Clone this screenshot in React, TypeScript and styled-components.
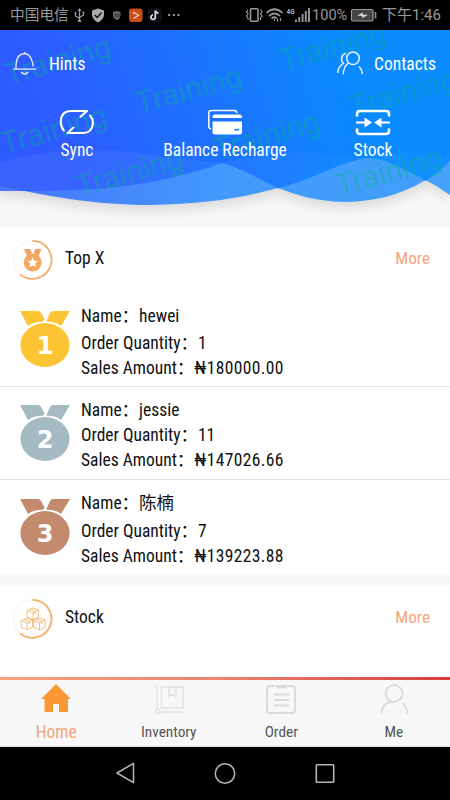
import React from "react";
import styled, { createGlobalStyle } from "styled-components";

const GlobalStyle = createGlobalStyle`
  * { box-sizing: border-box; }
  body {
    margin: 0;
    background: #000;
    font-family: "Roboto Condensed", Roboto, "Noto Sans CJK SC", sans-serif;
    font-size: 17.5px;
    color: #111;
  }
  svg { display: block; flex: none; }
`;

const Screen = styled.div`
  width: 450px;
  height: 800px;
  display: flex;
  flex-direction: column;
  overflow: hidden;
  background: #f7f7f7;
`;

const StatusBar = styled.div`
  height: 30px;
  flex: none;
  display: flex;
  align-items: center;
  background: #000;
  color: #999;
  padding: 0 10px 0 10px;
  font-family: Roboto, "Noto Sans CJK SC", sans-serif;
`;

const StatusText = styled.span<{ $size: number; $left?: number; $width?: number }>`
  font-size: ${(p) => p.$size}px;
  font-weight: 400;
  line-height: 31px;
  margin-left: ${(p) => p.$left ?? 0}px;
  ${(p) => (p.$width ? `width: ${p.$width}px;` : "")}
  white-space: nowrap;
`;

const Spacer = styled.div`
  flex: 1;
`;

const Header = styled.header`
  position: relative;
  height: 197px;
  flex: none;
  color: #fff;
`;

const Backdrop = styled.svg`
  position: absolute;
  inset: 0;
`;

const HeaderContent = styled.div`
  position: relative;
`;

const TopLinks = styled.div`
  display: flex;
  justify-content: space-between;
  padding: 20px 14px 0 13px;
  height: 78px;
`;

const TopLink = styled.div<{ $gap: number }>`
  display: flex;
  align-items: center;
  gap: ${(p) => p.$gap}px;
  height: 28px;
`;

const Actions = styled.div`
  display: grid;
  grid-template-columns: 154px 142px 154px;
`;

const Action = styled.div`
  display: flex;
  flex-direction: column;
  align-items: center;
  line-height: 28px;
  white-space: nowrap;
`;

const Card = styled.section<{ $height: number }>`
  height: ${(p) => p.$height}px;
  flex: none;
  background: #fff;
  overflow: hidden;
`;

const CardHead = styled.div<{ $height: number }>`
  display: flex;
  height: ${(p) => p.$height}px;
  padding: 12px 20px 0 12px;
`;

const CardTitle = styled.h2`
  margin: 0 auto 0 12px;
  font-size: 17.5px;
  font-weight: 400;
  line-height: 39px;
`;

const More = styled.span`
  color: #f4a57c;
  font-size: 17.2px;
  line-height: 39px;
`;

const Gap = styled.div`
  height: 12px;
  flex: none;
`;

const Seller = styled.div<{ $height: number; $pad: number }>`
  display: flex;
  height: ${(p) => p.$height}px;
  padding: 0 0 0 19px;
  & + & {
    border-top: 1px solid #e4e4e4;
  }
  & > :last-child {
    padding-top: ${(p) => p.$pad}px;
  }
`;

const Lines = styled.div`
  margin-left: 11px;
`;

const Line = styled.div<{ $height: number }>`
  height: ${(p) => p.$height}px;
  line-height: 25px;
  white-space: nowrap;
`;

const Amount = styled.span`
  letter-spacing: 0.36px;
`;

const MedalBox = styled.div<{ $top: number }>`
  padding-top: ${(p) => p.$top}px;
`;

const TabBar = styled.nav`
  height: 70px;
  flex: none;
  display: grid;
  grid-template-columns: repeat(4, 1fr);
  padding-top: 3px;
  background: linear-gradient(90deg, #f9a37c, #e98270 50%, #d93e38) 0 0 / 100% 3px no-repeat, #f7f7f7;
  border-bottom: 1px solid #dcdcdc;
`;

const Tab = styled.div<{ $active?: boolean }>`
  display: flex;
  flex-direction: column;
  align-items: center;
  padding-top: 3px;
  color: ${(p) => (p.$active ? "#f4a57c" : "#555")};
  font-size: ${(p) => (p.$active ? 17.5 : 15.3)}px;
  line-height: 34px;
`;

const SystemBar = styled.div`
  height: 53px;
  flex: none;
  display: flex;
  justify-content: center;
  align-items: center;
  gap: 76px;
  background: #000;
`;

const marks = [
  [2, 31], [133, 60], [277, 17], [348, 63], [-2, 100], [74, 143], [211, 106], [333, 142],
];

const Waves = () => (
  <Backdrop width="450" height="197" viewBox="0 0 450 197">
    <defs>
      <linearGradient id="sky" gradientUnits="userSpaceOnUse" x1="60" y1="120" x2="350" y2="20">
        <stop offset="0" stopColor="#2e5bff" />
        <stop offset="0.5" stopColor="#1c72ff" />
        <stop offset="1" stopColor="#0a8bff" />
      </linearGradient>
      <linearGradient id="foam" x1="0" x2="1" y1="0" y2="0">
        <stop offset="0" stopColor="#4675fd" />
        <stop offset="0.3" stopColor="#468afc" />
        <stop offset="0.5" stopColor="#429afc" />
        <stop offset="1" stopColor="#41a0fa" />
      </linearGradient>
      <filter id="soft" x="-10%" y="-10%" width="120%" height="130%">
        <feGaussianBlur stdDeviation="6" />
      </filter>
      <path id="a" d="M0 0H450V131C437 143 430 149 424 151C399 166 371 172 343 172C317 171 299 166 278 158C251 145 235 136 222 133C177 149 130 158 75 160C45 161 20 161 0 161Z" />
      <path id="b" d="M0 0H450V165C439 158 433 153 424 150C402 138 386 128 365 128C341 132 309 151 278 158C241 168 204 174 150 175C105 175 60 169 0 156Z" />
      <clipPath id="bclip"><use href="#b" /></clipPath>
    </defs>
    <g filter="url(#soft)" opacity="0.11" transform="translate(0 6)">
      <use href="#a" /><use href="#b" />
    </g>
    <use href="#a" fill="url(#foam)" />
    <use href="#b" fill="url(#foam)" />
    <g clipPath="url(#bclip)"><use href="#a" fill="url(#sky)" /></g>
    <g clipPath="url(#bclip)">
      <path d="M0 132C48 120 92 116 145 124Q190 130 222 133C177 149 130 158 75 160L0 161Z" fill="#fff" opacity="0.05" />
      <path d="M222 133C270 117 320 122 365 128Q410 118 450 128V165L365 128L278 158Z" fill="#fff" opacity="0.03" />
    </g>
    {marks.map(([x, y]) => (
      <text key={`${x}-${y}`} transform={`translate(${x + 6} ${y + 24}) rotate(-15.5)`} fill="#00b48c" fillOpacity="0.4" fontFamily="Roboto" fontSize="30.5">
        Training
      </text>
    ))}
  </Backdrop>
);

const Medal = ({ rank, color }: { rank: number; color: string }) => (
  <svg width="51" height="60" viewBox="0 0 51 60">
    <path fill={color} d="M1 2H19Q21 2 22 4L27 13Q16 12 9 17ZM51 2H34Q32 2 31 4L27 13Q35 12 42 17Z" />
    <path d="M26 10L29 14H23Z" fill="#fff" />
    <ellipse cx="26" cy="36" rx="25.8" ry="23.2" fill="#fff" />
    <ellipse cx="26" cy="36" rx="24.6" ry="22" fill={color} />
    <text x="26" y="45" textAnchor="middle" fill="#fff" fontFamily="DejaVu Sans" fontWeight="700" fontSize="24">{rank}</text>
  </svg>
);

const Ring = ({ children }: { children: React.ReactNode }) => (
  <svg width="41" height="41" viewBox="0 0 41 41" fill="none">
    <circle cx="20.5" cy="20.8" r="19" stroke="#f6f3f1" strokeWidth="1" />
    <path d="M20.5 1.8A19 19 0 1 1 8.2 35.3" stroke="#f3ac64" strokeWidth="1.7" />
    {children}
  </svg>
);

const Box = ({ x, y }: { x: number; y: number }) => (
  <path transform={`translate(${x} ${y})`} d="M0 2.6L6 0L11.5 2L11.5 9L6 11.8L0 9.4ZM0 2.6L6 4.8L11.5 2M6 4.8V11.8M3 1.3L8.5 3.4V6" stroke="#f6bc7c" strokeWidth="1" />
);

const sellers = [
  { name: "hewei", qty: "1", amount: "₦180000.00", color: "#fdc433", height: 91, pad: 9, medal: 14, lines: [27, 25, 25] },
  { name: "jessie", qty: "11", amount: "₦147026.66", color: "#a6bac4", height: 93, pad: 11, medal: 16, lines: [25, 25, 25] },
  { name: "陈楠", qty: "7", amount: "₦139223.88", color: "#c38a6e", height: 95, pad: 11, medal: 17, lines: [28, 25, 25] },
];

export default function App() {
  return (
    <>
      <GlobalStyle />
      <Screen>
        <StatusBar>
          <StatusText $size={14.7} $width={61}>中国电信</StatusText>
          <svg width="130" height="30" viewBox="71 0 130 30" fill="none" stroke="#999" strokeWidth="1.3">
            <path d="M79.500 10V20M75.500 13V16L79.500 18.500M83.500 12V15L79.500 17.500" />
            <path d="M79.500 8L81.500 11H77.500ZM78 20h3v2h-3zM74.700 12h1.600v1.600h-1.600zM82.700 11.500h1.600v1.600h-1.600z" fill="#999" stroke="none" />
            <path d="M98 8.500L104 10.500V15Q103.500 19.500 98 22.500Q92.500 19.500 92 15V10.500Z" fill="#aaa" stroke="none" />
            <path d="M94.800 15L97.200 17.500L101.500 12.800" stroke="#111" strokeWidth="1.5" />
            <path d="M113 12L117 11L120.500 12V16Q120 19 117 20Q113.500 19 113 16Z" fill="#686868" stroke="none" />
            <path d="M117 13V18M115 14V17M119 14V17" stroke="#222" strokeWidth=".8" />
            <rect x="129" y="8.500" width="13.500" height="13.500" rx="3" fill="#c64c18" stroke="none" />
            <path d="M133.500 11.800V14M133.500 18.500L138.500 15.300L133.500 12.300" stroke="#f4cdb8" strokeWidth="1.3" />
            <rect x="148" y="8.500" width="13.500" height="13.500" rx="3" fill="#14101a" stroke="none" />
            <path d="M155.300 10.500V17A2.200 2.200 0 1 1 153 15M155.300 10.500Q156 13 158.500 13.200" stroke="#ddd" strokeWidth="1.7" />
            <path d="M168 15h2M173 15h2M177.500 15h2" strokeWidth="1.8" />
          </svg>
          <Spacer />
          <svg width="67" height="30" viewBox="244 0 67 30" fill="none" stroke="#999" strokeWidth="1.3">
            <rect x="250.500" y="8.700" width="7.500" height="12.500" rx="1" strokeWidth="1.600" />
            <path d="M248 10L246.500 12L248 14L246.500 16L248 18V20M260.500 10L262 12L260.500 14L262 16L260.500 18V20" strokeWidth="1.200" />
            <path d="M266.500 13Q274.500 5.500 282.500 13M269 16Q274.500 11 280 16M271.500 18.500Q274.500 16 277 18.500" strokeWidth="1.700" />
            <path d="M274.500 19v2M277.500 18.500v3M280.500 18v3" strokeWidth="1.200" />
            <path d="M296 22V19.500M299.300 22V17M302.600 22V14M305.800 22V11M309 22V8" strokeWidth="1.900" />
            <text x="286.500" y="13.500" fill="#aaa" stroke="none" fontSize="7.500" fontWeight="700" fontFamily="Roboto Condensed">4G</text>
          </svg>
          <StatusText $size={14.6} $left={1} $width={38}>100%</StatusText>
          <svg width="29" height="30" viewBox="0 0 29 30" fill="none">
            <rect x="1.500" y="9.500" width="21.500" height="11.500" rx="1.500" fill="#444" stroke="#999" strokeWidth="1.200" />
            <path d="M7 15.800L12.800 12.500V14.700H18L12.200 18.200V15.800Z" fill="#ddd" />
            <path d="M25.500 12v6.500" stroke="#888" strokeWidth="1.700" />
          </svg>
          <StatusText $size={15} $left={3} $width={58}>下午1:46</StatusText>
        </StatusBar>

        <Header>
          <Waves />
          <HeaderContent>
            <TopLinks>
              <TopLink $gap={13}>
                <svg width="23" height="26" viewBox="0 0 23 26" fill="none" stroke="#e7efff" strokeWidth="1.300">
                  <path d="M.3 18.200H23M3 18V13.500Q3.500 3 11.700 2.500Q18 3 20 13.500V15.500M11.700 2.500V1" />
                  <path d="M8.300 21Q11.700 25 15 21" strokeWidth="1.700" />
                </svg>
                <span>Hints</span>
              </TopLink>
              <TopLink $gap={11}>
                <svg width="27" height="26" viewBox="0 0 27 26" fill="none" stroke="#e2f1ff" strokeWidth="1.500">
                  <circle cx="17" cy="7.300" r="6.300" />
                  <path d="M10 2.300A5.800 5.800 0 0 0 7.500 12.300Q2 15.500 1.700 22M12.500 12Q7.500 15.500 7.200 23.300M23 15.500Q26.200 18.500 26.400 23" />
                </svg>
                <span>Contacts</span>
              </TopLink>
            </TopLinks>
            <Actions>
              <Action>
                <svg width="36" height="28" viewBox="0 0 36 28" fill="none" stroke="#fff" strokeWidth="2.100" strokeLinecap="round" strokeLinejoin="round">
                  <path d="M4.800 22.500Q1.800 19 1.800 14Q2 3 12 3H28L21.500 8.800M31 7.500Q34 11 34 15Q33 25 24.500 25H8.500L14.500 19.500" />
                </svg>
                Sync
              </Action>
              <Action>
                <svg width="36" height="28" viewBox="0 0 36 28">
                  <path d="M4 21Q1.800 20.500 1.800 18V5Q1.800 2.500 4.500 2.500H27Q29.500 2.500 30 5" fill="none" stroke="#fff" strokeWidth="1.500" />
                  <path d="M5.500 9Q5.500 6.500 8 6.500H32.500Q35 6.500 35 9V10H5.500ZM5.500 13.500H35V24Q35 26.500 32.500 26.500H8Q5.500 26.500 5.500 24Z" fill="#fff" />
                  <path d="M27.500 21.700H32" stroke="#1976ff" strokeWidth="1.600" />
                </svg>
                Balance Recharge
              </Action>
              <Action>
                <svg width="36" height="28" viewBox="0 0 36 28" fill="none" stroke="#fff" strokeWidth="2.500">
                  <path d="M2 8.500V6Q2 3 5 3H31Q34 3 34 6V8.500M2 20.500V23Q2 26 5 26H31Q34 26 34 23V20.500" />
                  <path d="M1 14.500H12M24 14.500H35" strokeWidth="2.200" />
                  <path d="M9.500 9.500L17 14.500L9.500 19.500ZM26.500 9.500L19 14.500L26.500 19.500Z" fill="#fff" stroke="none" />
                </svg>
                Stock
              </Action>
            </Actions>
          </HeaderContent>
        </Header>

        <Card $height={347}>
          <CardHead $height={68}>
            <Ring>
              <path d="M12 10H18L20 14L15 17ZM29.500 10H23.500L21.500 14L26.500 17Z" fill="#eca567" />
              <circle cx="20.700" cy="23.500" r="9" fill="#f3a95f" />
              <path d="M20.700 18.200L22.200 21.700L26 22L23.100 24.500L24 28.200L20.700 26.200L17.400 28.200L18.300 24.500L15.400 22L19.200 21.700Z" fill="#fff" />
            </Ring>
            <CardTitle>Top X</CardTitle>
            <More>More</More>
          </CardHead>
          {sellers.map((s, i) => (
            <Seller key={s.name} $height={s.height} $pad={s.pad}>
              <MedalBox $top={s.medal}><Medal rank={i + 1} color={s.color} /></MedalBox>
              <Lines>
                <Line $height={s.lines[0]}>Name：{s.name}</Line>
                <Line $height={s.lines[1]}>Order Quantity：{s.qty}</Line>
                <Line $height={s.lines[2]}>Sales Amount：<Amount>{s.amount}</Amount></Line>
              </Lines>
            </Seller>
          ))}
        </Card>
        <Gap />
        <Card $height={91}>
          <CardHead $height={68}>
            <Ring>
              <Box x={15} y={10} />
              <Box x={9.200} y={20} />
              <Box x={21.500} y={20} />
            </Ring>
            <CardTitle>Stock</CardTitle>
            <More>More</More>
          </CardHead>
        </Card>

        <TabBar>
          <Tab $active>
            <svg width="32" height="32" viewBox="0 0 32 32">
              <path d="M16 1L31 16H28V27.500Q28 29 26.500 29H19V21H13V29H6Q4.500 29 4.500 27.500V16H1Z" fill="#f89734" />
            </svg>
            Home
          </Tab>
          <Tab>
            <svg width="32" height="32" viewBox="0 0 32 32" fill="none" stroke="#e2e2e2" strokeWidth="1.500">
              <path d="M1 3Q4 2.500 4 6V26M8.500 4H30V25H8.500ZM16 4V13L19.500 11.500L23 13V4M7 29H30" />
              <circle cx="4.800" cy="28.500" r="2.200" />
            </svg>
            Inventory
          </Tab>
          <Tab>
            <svg width="32" height="32" viewBox="0 0 32 32" fill="none" stroke="#dadada" strokeWidth="2">
              <rect x="2" y="3" width="28" height="27" rx="3" />
              <path d="M9 11.500H24M9 17H24M9 22.500H24" />
              <path d="M10 1.500H23V3Q22 6 20 6H13Q11 6 10 3Z" fill="#d9d9d9" stroke="#f7f7f7" strokeWidth="1" />
            </svg>
            Order
          </Tab>
          <Tab>
            <svg width="32" height="32" viewBox="0 0 32 32" fill="none" stroke="#dadada" strokeWidth="1.700">
              <ellipse cx="16" cy="10.500" rx="8.500" ry="8.300" />
              <path d="M16 18.800Q4 18.500 3.500 30.500M24.500 20Q28.800 23.500 29.200 30.500" />
            </svg>
            Me
          </Tab>
        </TabBar>

        <SystemBar>
          <svg width="24" height="24" viewBox="0 0 24 24" fill="none" stroke="#b5b5b5" strokeWidth="1.500" strokeLinejoin="round">
            <path d="M20.500 1.300V20.700L4 11Z" />
          </svg>
          <svg width="24" height="24" viewBox="0 0 24 24" fill="none" stroke="#b5b5b5" strokeWidth="1.500">
            <circle cx="12" cy="11.500" r="9.700" />
          </svg>
          <svg width="24" height="24" viewBox="0 0 24 24" fill="none" stroke="#b5b5b5" strokeWidth="1.600">
            <rect x="3.300" y="2.800" width="17.400" height="17.400" rx=".8" />
          </svg>
        </SystemBar>
      </Screen>
    </>
  );
}
